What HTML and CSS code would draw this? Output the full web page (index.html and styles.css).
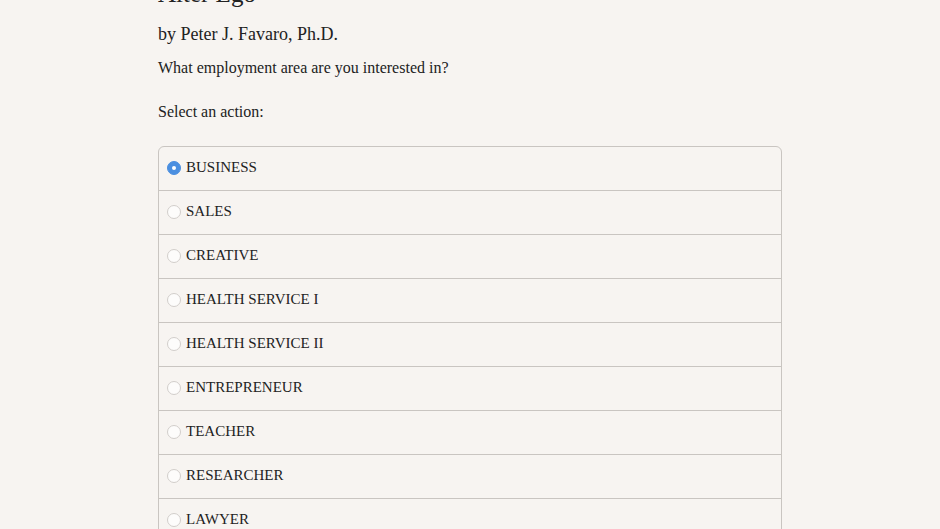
FILE: index.html
```html
<!DOCTYPE html>
<html>
<head>
<meta charset="utf-8">
<link rel="stylesheet" href="styles.css">
</head>
<body>
<main class="page">
  <h1 class="title">Alter Ego</h1>
  <p class="author">by Peter J. Favaro, Ph.D.</p>
  <p class="question">What employment area are you interested in?</p>
  <p class="prompt">Select an action:</p>
  <ul class="choices">
    <li class="choice"><span class="radio checked"></span><span class="label">BUSINESS</span></li>
    <li class="choice"><span class="radio"></span><span class="label">SALES</span></li>
    <li class="choice"><span class="radio"></span><span class="label">CREATIVE</span></li>
    <li class="choice"><span class="radio"></span><span class="label">HEALTH SERVICE I</span></li>
    <li class="choice"><span class="radio"></span><span class="label">HEALTH SERVICE II</span></li>
    <li class="choice"><span class="radio"></span><span class="label">ENTREPRENEUR</span></li>
    <li class="choice"><span class="radio"></span><span class="label">TEACHER</span></li>
    <li class="choice"><span class="radio"></span><span class="label">RESEARCHER</span></li>
    <li class="choice"><span class="radio"></span><span class="label">LAWYER</span></li>
    <li class="choice"><span class="radio"></span><span class="label">DOCTOR</span></li>
  </ul>
</main>
</body>
</html>
```

FILE: styles.css
```css
html, body {
  margin: 0;
  padding: 0;
  background: #f7f4f1;
  overflow: hidden;
  height: 529px;
}
body {
  font-family: "Liberation Serif", "DejaVu Serif", serif;
  color: #222;
}
.page {
  width: 624px;
  margin: 0 auto;
}
.title {
  font-size: 25px;
  font-weight: normal;
  margin: -21px 0 0 0;
  line-height: 30px;
}
.author {
  font-size: 18px;
  margin: 13px 0 0 0;
  line-height: 24px;
}
.question {
  font-size: 16px;
  margin: 10px 0 0 0;
  line-height: 24px;
}
.prompt {
  font-size: 16px;
  margin: 20px 0 0 0;
  line-height: 24px;
}
.choices {
  list-style: none;
  margin: 22px 0 0 0;
  padding: 0;
  border: 1px solid #c9c5c1;
  border-radius: 6px;
}
.choice {
  display: flex;
  align-items: center;
  padding: 0 0 3px 8px;
  box-sizing: border-box;
  height: 44px;
  border-top: 1px solid #c9c5c1;
  font-size: 15px;
}
.choice:first-child {
  border-top: none;
  height: 43px;
}
.radio {
  width: 12px;
  height: 12px;
  border: 1px solid #d2cecb;
  border-radius: 50%;
  background: #fdfcfb;
  margin-right: 5px;
  margin-top: 2px;
  flex: none;
  box-sizing: content-box;
}
.radio.checked {
  background: #4b8fe0;
  border-color: #4b8fe0;
  position: relative;
}
.radio.checked::after {
  content: "";
  position: absolute;
  width: 4px;
  height: 4px;
  border-radius: 50%;
  background: #fff;
  left: 4px;
  top: 4px;
}
.label {
  line-height: 20px;
}
```
